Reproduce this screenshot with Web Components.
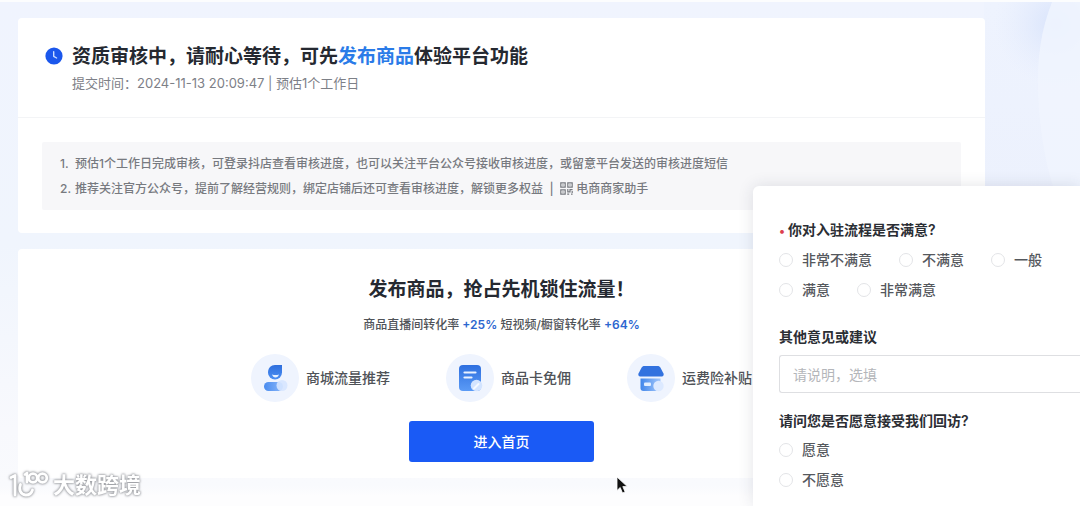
<!DOCTYPE html>
<html lang="zh-CN">
<head>
<meta charset="utf-8">
<meta name="viewport" content="width=device-width, initial-scale=1">
<title>资质审核</title>
<style>
  html, body { margin: 0; }
  body {
    font-family: Inter, "Noto Sans CJK SC", sans-serif;
    font-size: 12px;
    color: #252931;
    background: #fff;
  }
</style>
</head>
<body>
<review-page></review-page>

<script>
const define = (name, html, setup) => {
  const template = document.createElement('template');
  template.innerHTML = html;
  customElements.define(name, class extends HTMLElement {
    constructor() {
      super();
      this.attachShadow({ mode: 'open' }).append(template.content.cloneNode(true));
    }
    connectedCallback() { if (setup) setup(this, this.shadowRoot); }
  });
};

define('panel-card', `
  <style>
    :host { display: block; background: #fff; border-radius: 4px; }
  </style>
  <slot></slot>
`);

define('review-status', `
  <style>
    :host { display: block; }
    header { display: flex; gap: 9px; padding: 26px 27px 24px; border-bottom: 1px solid #f3f4f6; }
    svg { flex: none; margin-top: 3px; }
    h1 { margin: 0 0 3px; font-size: 19px; line-height: 26px; font-weight: 600; }
    a { color: #2a7be8; text-decoration: none; }
    p { margin: 0; font-size: 13px; line-height: 20px; color: #7d8087; }
    .body { padding: 24px 24px 23px; }
  </style>
  <header>
    <svg width="18" height="18" viewBox="0 0 18 18" aria-hidden="true">
      <circle cx="9" cy="9" r="8.6" fill="#1b57ec"/>
      <path d="M8.7 4.7v4.6l2.9 1.7" fill="none" stroke="#c9dcff" stroke-width="1.4" stroke-linecap="round" stroke-linejoin="round"/>
    </svg>
    <div>
      <h1>资质审核中，请耐心等待，可先<a href="#publish">发布商品</a>体验平台功能</h1>
      <p>提交时间：2024-11-13 20:09:47 | 预估1个工作日</p>
    </div>
  </header>
  <div class="body"><slot></slot></div>
`);

define('review-notes', `
  <style>
    :host { display: block; background: #f7f7f9; border-radius: 2px; padding: 9px 18px; color: #777a80; font-weight: 500; }
    ol { list-style: none; margin: 0; padding: 0; }
    li { display: flex; line-height: 25px; }
    .n { flex: none; width: 15px; }
    svg { vertical-align: -2px; }
  </style>
  <ol>
    <li><span class="n">1.</span><span>预估1个工作日完成审核，可登录抖店查看审核进度，也可以关注平台公众号接收审核进度，或留意平台发送的审核进度短信</span></li>
    <li><span class="n">2.</span><span>推荐关注官方公众号，提前了解经营规则，绑定店铺后还可查看审核进度，解锁更多权益&nbsp; |&nbsp;
      <svg width="13" height="13" viewBox="0 0 13 13" fill="none" stroke="#777a80" stroke-width="1.2" aria-hidden="true">
        <path d="M.8.8h4.4v4.4H.8zM7.8.8h4.4v4.4H7.8zM.8 7.8h4.4v4.4H.8zM2.3 3h1.4M9.3 3h1.4M2.3 10h1.4M7.8 7v2.8h2.2V7.6h2.6M7.2 12.2h2M11 12.2h1.6M12.2 9v2"/>
      </svg>
      电商商家助手</span></li>
  </ol>
`);

define('feature-item', `
  <style>
    :host { display: flex; align-items: center; gap: 7px; font-size: 14px; line-height: 20px; font-weight: 500; color: #505358; }
    .icon { display: grid; place-items: center; width: 48px; height: 48px; border-radius: 50%; background: #eff4fe; }
  </style>
  <span class="icon"><slot name="icon"></slot></span>
  <span><slot></slot></span>
`);

define('publish-promo', `
  <style>
    :host { display: flex; flex-direction: column; align-items: center; padding: 27px 0 16px; }
    h2 { margin: 0 0 11px; font-size: 19px; line-height: 28px; font-weight: 600; }
    p { margin: 0 0 19px; line-height: 20px; font-weight: 500; color: #505358; }
    b { font-weight: 600; color: #2c66cf; }
    .features { display: flex; gap: 56px; margin-bottom: 19px; }
    button {
      width: 185px; height: 41px; border: 0; border-radius: 3px; background: #1a5af5; color: #fff;
      font: 500 14px/20px Inter, "Noto Sans CJK SC", sans-serif;
    }
  </style>
  <h2>发布商品，抢占先机锁住流量！</h2>
  <p>商品直播间转化率 <b>+25%</b> 短视频/橱窗转化率 <b>+64%</b></p>
  <div class="features">
    <feature-item>
      <svg slot="icon" width="28" height="28" viewBox="0 0 28 28" aria-hidden="true">
        <defs>
          <linearGradient id="ua" x1="0" y1="0" x2="0" y2="1"><stop stop-color="#2f6fdd"/><stop offset="1" stop-color="#4b8ff3"/></linearGradient>
          <linearGradient id="ub"><stop stop-color="#4a8cef"/><stop offset="1" stop-color="#8bb8fa"/></linearGradient>
        </defs>
        <path d="M14 1h7v7.500a7 7 0 1 1-14 0C7 4 10 1 14 1z" fill="url(#ua)"/>
        <path d="M11 10.500q3.500 1 7 0-1 3-3.500 3t-3.500-3z" fill="#e6f0ff"/>
        <rect x="3" y="18" width="19" height="9" rx="4.500" fill="url(#ub)"/>
        <circle cx="21" cy="21.500" r="5.500" fill="#d6e6ff" opacity=".9"/>
      </svg>
      商城流量推荐
    </feature-item>
    <feature-item>
      <svg slot="icon" width="28" height="28" viewBox="0 0 28 28" aria-hidden="true">
        <defs><linearGradient id="ca" x1="0" y1="0" x2="0" y2="1"><stop stop-color="#2e6fdf"/><stop offset="1" stop-color="#5b9bf6"/></linearGradient></defs>
        <rect x="3" y="1" width="22" height="26" rx="4" fill="url(#ca)"/>
        <path d="M8.500 8.500h11M8.500 13.500h7" stroke="#eaf2ff" stroke-width="2.200" stroke-linecap="round"/>
        <circle cx="20.500" cy="21.500" r="5.800" fill="#d3e4ff"/>
        <path d="M18 24.500l4.500-4.500" stroke="#f5f9ff" stroke-width="2" stroke-linecap="round"/>
      </svg>
      商品卡免佣
    </feature-item>
    <feature-item>
      <svg slot="icon" width="28" height="28" viewBox="0 0 28 28" aria-hidden="true">
        <defs><linearGradient id="sa"><stop stop-color="#4186ea"/><stop offset="1" stop-color="#a4c8fc"/></linearGradient></defs>
        <path d="M7.500 2h13c1.500 0 2.300.5 3 1.700L26.500 9.500c.6 1.500-.1 3-1.800 3H3.300c-1.700 0-2.400-1.500-1.800-3l3-5.800C5.200 2.500 6 2 7.500 2z" fill="#3272df"/>
        <path d="M3.500 14.500h20V24a3 3 0 0 1-3 3h-14a3 3 0 0 1-3-3z" fill="url(#sa)"/>
        <rect x="7" y="18.500" width="7" height="3.500" rx="1" fill="#e2eeff"/>
        <circle cx="21.500" cy="22" r="5.200" fill="#dce9ff"/>
      </svg>
      运费险补贴
    </feature-item>
  </div>
  <button type="button">进入首页</button>
`);

define('radio-option', `
  <style>
    :host { display: block; }
    label { display: flex; align-items: center; gap: 9px; font-size: 14px; line-height: 30px; font-weight: 500; color: #55585d; }
    input { appearance: none; width: 14px; height: 14px; margin: 0; border: 1px solid #e3e4e7; border-radius: 50%; background: #fff; }
    input:checked { border: 4px solid #1a5af5; }
  </style>
  <label><input type="radio"><span><slot></slot></span></label>
`, (host, root) => {
  const input = root.querySelector('input');
  input.name = host.getAttribute('name');
  input.addEventListener('change', () => {
    for (const other of host.parentNode.querySelectorAll('radio-option')) {
      if (other !== host) other.shadowRoot.querySelector('input').checked = false;
    }
  });
});

define('survey-panel', `
  <style>
    :host {
      display: block; box-sizing: border-box; background: #fff; border-radius: 6px 0 0 0;
      box-shadow: 0 0 16px rgba(40, 50, 70, .13); padding: 29px 0 0 26px; font-size: 14px;
    }
    fieldset { border: 0; margin: 0; padding: 0; min-width: 0; }
    legend, .title { display: block; padding: 0; font-size: 14px; line-height: 29px; font-weight: 600; color: #2b2e34; }
    i { font-style: normal; color: #dc3f4f; margin-right: 3px; font-size: 12px; }
    .row { display: flex; flex-wrap: wrap; column-gap: 27px; }
    .other { margin: 17px 0 13px; }
    input {
      display: block; box-sizing: border-box; width: 100%; height: 38px; padding: 0 13px;
      border: 1px solid #dedfe2; border-right: 0; border-radius: 3px 0 0 3px; background: #fff;
      font: 14px/20px Inter, "Noto Sans CJK SC", sans-serif; color: #2b2e34;
    }
    input::placeholder { color: #b4b6ba; opacity: 1; }
    .other .title { padding-bottom: 4px; }
  </style>
  <fieldset>
    <legend><i>•</i>你对入驻流程是否满意?</legend>
    <div class="row">
      <radio-option name="satisfaction">非常不满意</radio-option>
      <radio-option name="satisfaction">不满意</radio-option>
      <radio-option name="satisfaction">一般</radio-option>
      <radio-option name="satisfaction">满意</radio-option>
      <radio-option name="satisfaction">非常满意</radio-option>
    </div>
  </fieldset>
  <div class="other">
    <label class="title" for="advice">其他意见或建议</label>
    <input id="advice" type="text" placeholder="请说明，选填">
  </div>
  <fieldset>
    <legend>请问您是否愿意接受我们回访?</legend>
    <radio-option name="visit">愿意</radio-option>
    <radio-option name="visit">不愿意</radio-option>
  </fieldset>
`);

define('brand-mark', `
  <style>
    :host {
      display: flex; align-items: center; gap: 4px; color: #fff; font-size: 22px; line-height: 26px; font-weight: 600;
      filter: drop-shadow(0 0 1px #96989d) drop-shadow(0 0 1px #b0b2b6);
    }
  </style>
  <svg width="40" height="28" viewBox="0 0 40 28" fill="none" stroke="#fff" stroke-width="2.800" stroke-linecap="round" stroke-linejoin="round" aria-hidden="true">
    <path d="M2 6.500l4-2V24"/>
    <path d="M11.500 13.500c-2 5 0 10 5 10.500 3.500.2 6-1.500 7-5"/>
    <path d="M16 3.500l2-1.500v9"/>
    <circle cx="24" cy="7" r="4.300"/>
    <circle cx="33.500" cy="7" r="4.300"/>
  </svg>
  <span>大数跨境</span>
`);

define('review-page', `
  <style>
    :host {
      display: block; position: relative; box-sizing: border-box; min-height: 100vh; overflow: hidden;
      padding: 16px 95px 28px 18px; border-top: 2px solid #fcfdfe;
      background: linear-gradient(#f0f4fe, #f0f5fd 48%, #f8f9fd 85%, #f9fafd 96%, #fdfdfe 98%);
    }
    .decor { position: absolute; top: 0; right: 0; }
    main { position: relative; display: grid; gap: 16px; }
    survey-panel { position: absolute; top: 184px; right: 0; bottom: 0; width: 327px; }
    brand-mark { position: absolute; left: 9px; bottom: 7px; }
    .pointer { position: absolute; left: 616px; top: 474px; }
  </style>
  <svg class="decor" width="96" height="200" viewBox="0 0 96 200" aria-hidden="true">
    <defs>
      <radialGradient id="glow" cx="72" cy="22" r="62" gradientUnits="userSpaceOnUse">
        <stop stop-color="#d8e3fb"/><stop offset="1" stop-color="#e6edfd" stop-opacity="0"/>
      </radialGradient>
      <linearGradient id="base" x1="0" y1="0" x2="0" y2="1"><stop stop-color="#eef3fe"/><stop offset="1" stop-color="#ecf1fd"/></linearGradient>
    </defs>
    <rect width="96" height="200" fill="url(#base)"/>
    <rect width="96" height="200" fill="url(#glow)"/>
    <path d="M68 0C57 28 53 55 54 90q2 60 20 110h22V0z" fill="#f0f4fe" opacity=".85"/>
  </svg>
  <main>
    <panel-card><review-status><review-notes></review-notes></review-status></panel-card>
    <panel-card><publish-promo></publish-promo></panel-card>
  </main>
  <survey-panel></survey-panel>
  <brand-mark></brand-mark>
  <svg class="pointer" width="13" height="19" viewBox="0 0 13 19" aria-hidden="true">
    <path d="M1 1v13.500l3.200-3 2.300 5.500 2.600-1.100-2.300-5.300h4.500z" fill="#111" stroke="#fff" stroke-width=".8"/>
  </svg>
`);
</script>
</body>
</html>
